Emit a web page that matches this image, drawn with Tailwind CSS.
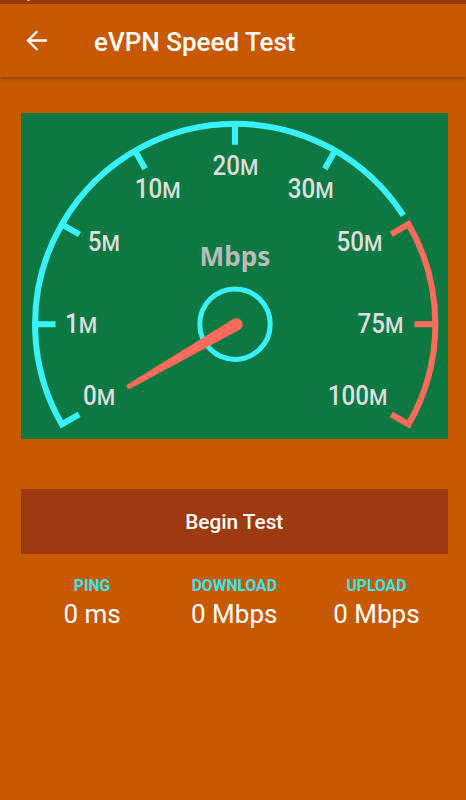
<!DOCTYPE html>
<html lang="en">
<head>
    <meta charset="UTF-8">
    <meta name="viewport" content="width=device-width, initial-scale=1.0">
    <title>eVPN Speed Test</title>
    <script src="https://cdn.jsdelivr.net/npm/@tailwindcss/browser@4"></script>
</head>
<body class="bg-[#c65902] font-['Roboto',sans-serif] text-white h-screen overflow-hidden flex flex-col">

    <!-- Status bar -->
    <div class="h-1 shrink-0 bg-[#9d3a0f] pl-[27px]">
        <div class="w-[3px] h-px bg-[#d8c4bc] rounded-b-full"></div>
    </div>

    <!-- App bar -->
    <header class="h-[73px] shrink-0 flex items-center pl-[26px] shadow-[0_1px_4px_rgba(0,0,0,0.35)]">
        <svg class="w-[21px] h-[21px]" viewBox="0 0 21 21" fill="none" stroke="#fff" stroke-width="2.3">
            <path d="M21 10.5H2M11.3 1.2L2 10.5l9.3 9.3"/>
        </svg>
        <h1 class="ml-[47px] mt-[3px] text-[26px] leading-8 font-medium whitespace-nowrap">eVPN Speed Test</h1>
    </header>

    <main class="pt-[35.5px] pl-[21px] pr-[18.5px]">
        <!-- Gauge -->
        <svg id="gauge" class="block w-[426.5px] h-[326px] bg-[#0e7843]" viewBox="0 0 426.5 326" fill="none">
            <g stroke="#38f2ff" stroke-width="6">
                <path d="M58.1 301.3L40.8 311.3A200.5 200.5 0 0 1 214 10.8A200.5 200.5 0 0 1 382.3 102.4"/>
                <path d="M13.5 211.2H34.5M40.4 111.1L58.5 121.5M113.8 37.6L124.2 55.8M214 10.8V31.7M314.2 37.6L303.8 55.8"/>
                <circle cx="214" cy="211.2" r="35.2" stroke-width="5"/>
            </g>
            <g stroke="#ff6c5c" stroke-width="6">
                <path d="M370.3 121.2L387.6 111.2A200.5 200.5 0 0 1 387.6 311.3L370.3 301.3"/>
                <path d="M414.5 211.2H393.5"/>
            </g>
            <path d="M107.2 271.1L212 206.3A6.2 6.2 0 1 1 218 217.1L109.6 275.5A2.5 2.5 0 0 1 107.2 271.1Z" fill="#ff6c5c"/>
            <text x="214" y="153" text-anchor="middle" textLength="71" lengthAdjust="spacingAndGlyphs" class="font-['Noto_Sans'] font-bold text-[26px]" fill="#b9bcb9">Mbps</text>
        </svg>

        <button class="block w-full h-[65px] mt-[50.5px] bg-[#9d3a0f] text-[20.8px] font-medium pt-[3px]">Begin Test</button>

        <!-- Results -->
        <div class="grid grid-cols-3 mt-5 text-center whitespace-nowrap">
            <div>
                <div class="text-[15.7px] leading-6 font-bold text-[#38e8ec]">PING</div>
                <div class="text-[26px] leading-8">0 ms</div>
            </div>
            <div>
                <div class="text-[15.7px] leading-6 font-bold text-[#38e8ec]">DOWNLOAD</div>
                <div class="text-[26px] leading-8">0 Mbps</div>
            </div>
            <div>
                <div class="text-[15.7px] leading-6 font-bold text-[#38e8ec]">UPLOAD</div>
                <div class="text-[26px] leading-8">0 Mbps</div>
            </div>
        </div>
    </main>

    <script>
        // x is the left edge of the small M, y the baseline
        const labels = [
            { value: '0', x: 77.7, y: 291.8 },
            { value: '1', x: 59.7, y: 220.5 },
            { value: '5', x: 82.4, y: 138.5 },
            { value: '10', x: 143.2, y: 85.4 },
            { value: '20', x: 221, y: 61.9 },
            { value: '30', x: 296.3, y: 85.4 },
            { value: '50', x: 345, y: 138.5 },
            { value: '75', x: 366, y: 220.5 },
            { value: '100', x: 350, y: 291.8 }
        ];
        const gauge = document.getElementById('gauge');

        function addText(content, transform, size, anchor) {
            const text = document.createElementNS('http://www.w3.org/2000/svg', 'text');
            text.setAttribute('transform', transform);
            text.setAttribute('font-size', size);
            text.setAttribute('font-weight', 500);
            text.setAttribute('text-anchor', anchor);
            text.setAttribute('fill', '#dedede');
            text.textContent = content;
            gauge.appendChild(text);
        }

        labels.forEach(({ value, x, y }) => {
            // digits are narrowed, the unit nearly keeps its width
            addText(value, `translate(${x - 2} ${y - 0.3}) scale(0.85 1)`, 28.5, 'end');
            addText('M', `translate(${x - 2} ${y - 0.3}) scale(0.98 1)`, 21.5, 'start');
        });
    </script>
</body>
</html>
